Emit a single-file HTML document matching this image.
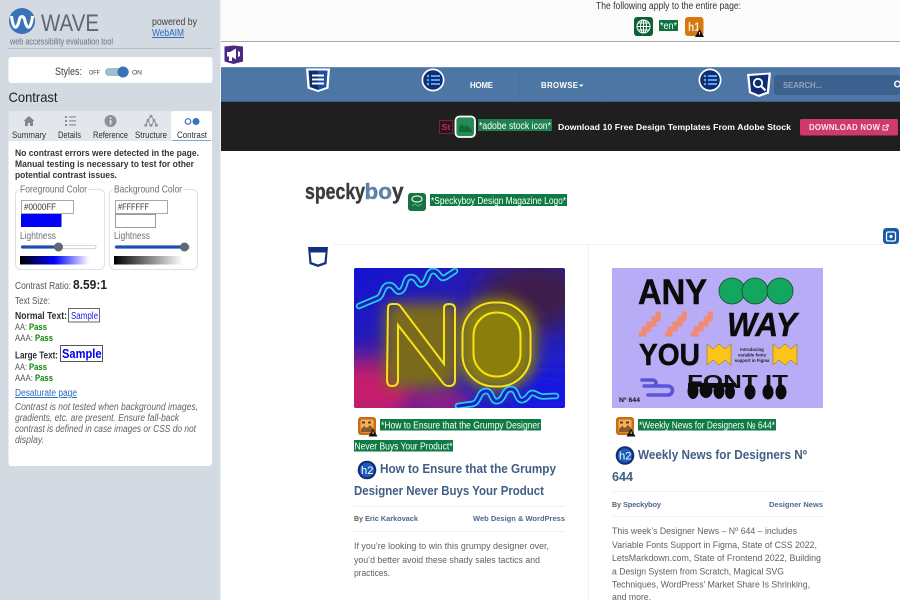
<!DOCTYPE html>
<html lang="en"><head><meta charset="utf-8"><title>WAVE Contrast</title>
<style>
html,body{margin:0;padding:0;width:900px;height:600px;overflow:hidden;background:#fff}
svg{display:block;position:absolute;left:0;top:0;filter:blur(.25px)}
text{font-family:"Liberation Sans",sans-serif;white-space:pre}
.s{fill:#3c3f44}
.b{font-weight:bold}
.h{font-weight:bold;font-size:12.8px;fill:#3f5f85}
.m{font-weight:bold;font-size:7.5px;fill:#4a6a90}
.p{font-size:9.6px;fill:#5f5f5f}
.alt{font-size:9.800px;fill:#fff}
.pass{font-weight:bold;font-size:9.500px;fill:#0a8a0a}
.w{fill:#fff}
</style></head><body>
<svg width="900" height="600" viewBox="0 0 900 600" xmlns="http://www.w3.org/2000/svg">
<defs>
<linearGradient id="gf" x1="0" x2="1" y1="0" y2="0"><stop offset="0" stop-color="#000"/><stop offset=".5" stop-color="#00f"/><stop offset="1" stop-color="#fff"/></linearGradient>
<linearGradient id="gb" x1="0" x2="1" y1="0" y2="0"><stop offset="0" stop-color="#000"/><stop offset="1" stop-color="#fff"/></linearGradient>
<linearGradient id="n1" x1="0" x2="1" y1="0" y2="1"><stop offset="0" stop-color="#1212d4"/><stop offset=".45" stop-color="#2e1fa8"/><stop offset="1" stop-color="#1a20d8"/></linearGradient>
<filter id="bl" x="-40%" y="-40%" width="180%" height="180%"><feGaussianBlur stdDeviation="7"/></filter>
<filter id="bl2" x="-40%" y="-40%" width="180%" height="180%"><feGaussianBlur stdDeviation="13"/></filter>
<clipPath id="c1"><rect x="354" y="268" width="211" height="140" rx="2"/></clipPath>
</defs>

<!-- sidebar -->
<rect width="220" height="600" fill="#d3dae2"/>
<rect x="220" width="1" height="600" fill="#eef0f3"/>
<circle cx="22" cy="21" r="13" fill="#3a72b8"/>
<path d="M11.500 16 C13 30 17 30 19 21 C20 15 24 15 25 21 C27 30 31 30 32.500 16" fill="none" stroke="#fff" stroke-width="3"/>
<text x="41" y="31" font-size="24" fill="#5d6772" textLength="58" lengthAdjust="spacingAndGlyphs">WAVE</text>
<text x="10" y="44.500" font-size="9.500" fill="#6a7480" textLength="103" lengthAdjust="spacingAndGlyphs">web accessibility evaluation tool</text>
<rect x="8" y="48" width="205" height="1" fill="#b6bec7"/>
<text x="152" y="25" font-size="9.800" fill="#3c3f44" textLength="45" lengthAdjust="spacingAndGlyphs">powered by</text>
<text x="152" y="36" font-size="9.800" fill="#2a6bc0" text-decoration="underline" textLength="32" lengthAdjust="spacingAndGlyphs">WebAIM</text>
<rect x="8.500" y="57" width="204" height="26" rx="3" fill="#fff"/>
<text x="55" y="75" font-size="11" class="s" textLength="27" lengthAdjust="spacingAndGlyphs">Styles:</text>
<text x="89" y="74.500" font-size="6.500" class="s" textLength="11" lengthAdjust="spacingAndGlyphs">OFF</text>
<rect x="105" y="68" width="24" height="8" rx="4" fill="#a0bfce"/>
<circle cx="123" cy="72" r="5.500" fill="#3a72b8"/>
<text x="132" y="74.500" font-size="6.500" class="s" textLength="10" lengthAdjust="spacingAndGlyphs">ON</text>
<text x="8.500" y="102" font-size="14" fill="#222" textLength="49" lengthAdjust="spacingAndGlyphs">Contrast</text>

<!-- tabs -->
<path d="M8.500 141V114a3 3 0 0 1 3-3H212V141Z" fill="#e3e7ec"/>
<path d="M8.500 141H212V463a3 3 0 0 1-3 3H11.500a3 3 0 0 1-3-3Z" fill="#fff"/>
<path d="M171 141V114a3 3 0 0 1 3-3h35a3 3 0 0 1 3 3v27Z" fill="#fff"/>
<rect x="172" y="140" width="39" height="1" fill="#6d8fc0" opacity=".8"/>
<path d="M23.500 121l5.500-5 5.500 5h-1.500v5h-3v-3h-2v3h-3v-5Z" fill="#808890"/>
<g fill="#878f97"><rect x="65" y="116" width="2" height="2"/><rect x="65" y="120" width="2" height="2"/><rect x="65" y="124" width="2" height="2"/><rect x="69" y="116.300" width="7" height="1.200"/><rect x="69" y="120.300" width="7" height="1.200"/><rect x="69" y="124.300" width="7" height="1.200"/></g>
<circle cx="110.500" cy="121" r="6" fill="#8a9199"/><rect x="109.700" y="120" width="1.700" height="4.500" fill="#e3e7ec"/><rect x="109.700" y="117.300" width="1.700" height="1.700" fill="#e3e7ec"/>
<path d="M151 116l-3 4M151 116l3 4M148 120l-2.500 5M148 120l2 5M154 120l-2 5M154 120l2.500 5" stroke="#8a9199" stroke-width="1" fill="none"/>
<g fill="#8a9199"><rect x="149.700" y="115" width="2.600" height="2.600"/><rect x="146.700" y="119" width="2.600" height="2.600"/><rect x="152.700" y="119" width="2.600" height="2.600"/><rect x="144.500" y="124" width="2.600" height="2.600"/><rect x="149.700" y="124" width="2.600" height="2.600"/><rect x="155" y="124" width="2.600" height="2.600"/></g>
<circle cx="188" cy="121.500" r="2.800" fill="#fff" stroke="#3a72b8" stroke-width="1.200"/><circle cx="196" cy="121.500" r="3.500" fill="#3a72b8"/>
<g font-size="8.800" fill="#2c3036">
<text x="12" y="138" textLength="34" lengthAdjust="spacingAndGlyphs">Summary</text>
<text x="58" y="138" textLength="23" lengthAdjust="spacingAndGlyphs">Details</text>
<text x="93" y="138" textLength="35" lengthAdjust="spacingAndGlyphs">Reference</text>
<text x="135" y="138" textLength="32" lengthAdjust="spacingAndGlyphs">Structure</text>
<text x="177" y="138" textLength="30" lengthAdjust="spacingAndGlyphs">Contrast</text>
</g>

<!-- panel -->
<g font-size="9.600" class="b" fill="#33363a">
<text x="15" y="156" textLength="184" lengthAdjust="spacingAndGlyphs">No contrast errors were detected in the page.</text>
<text x="15" y="167" textLength="179" lengthAdjust="spacingAndGlyphs">Manual testing is necessary to test for other</text>
<text x="15" y="178" textLength="102" lengthAdjust="spacingAndGlyphs">potential contrast issues.</text>
</g>
<rect x="15.500" y="189.500" width="89" height="80" rx="5" fill="#fff" stroke="#dde1e6"/>
<rect x="109.500" y="189.500" width="88" height="80" rx="5" fill="#fff" stroke="#dde1e6"/>
<rect x="19" y="186" width="69" height="8" fill="#fff"/>
<rect x="113" y="186" width="70" height="8" fill="#fff"/>
<g font-size="9.800" fill="#6a7178">
<text x="20" y="192.500" textLength="67" lengthAdjust="spacingAndGlyphs">Foreground Color</text>
<text x="114" y="192.500" textLength="68" lengthAdjust="spacingAndGlyphs">Background Color</text>
<text x="20" y="239" textLength="36" lengthAdjust="spacingAndGlyphs">Lightness</text>
<text x="114" y="239" textLength="36" lengthAdjust="spacingAndGlyphs">Lightness</text>
</g>
<rect x="21.500" y="200.500" width="52" height="13" fill="#fff" stroke="#a8a8a8"/>
<rect x="115.500" y="200.500" width="52" height="13" fill="#fff" stroke="#a8a8a8"/>
<text x="24" y="210" font-size="9.200" fill="#333" textLength="32" lengthAdjust="spacingAndGlyphs">#0000FF</text>
<text x="118" y="210" font-size="9.200" fill="#333" textLength="31" lengthAdjust="spacingAndGlyphs">#FFFFFF</text>
<rect x="21" y="214" width="40.500" height="13" fill="#0000f5"/>
<rect x="115.500" y="214.500" width="40" height="13" fill="#fff" stroke="#9a9a9a"/>
<rect x="21" y="245.500" width="75" height="3" rx="1.500" fill="#fff" stroke="#c6c9cd" stroke-width=".8"/>
<rect x="21" y="245.500" width="37" height="3" rx="1.500" fill="#1a50b5"/>
<circle cx="58.500" cy="247" r="4.500" fill="#5e6874"/>
<rect x="115" y="245.500" width="75" height="3" rx="1.500" fill="#fff" stroke="#c6c9cd" stroke-width=".8"/>
<rect x="115" y="245.500" width="70" height="3" rx="1.500" fill="#1a50b5"/>
<circle cx="184.500" cy="247" r="4.500" fill="#5e6874"/>
<rect x="20" y="256" width="69" height="8.500" fill="url(#gf)"/>
<rect x="114" y="256" width="69" height="8.500" fill="url(#gb)"/>

<text x="15" y="289" font-size="9.800" fill="#555" textLength="56" lengthAdjust="spacingAndGlyphs">Contrast Ratio:</text>
<text x="73" y="289" font-size="12.500" class="b" fill="#222" textLength="34" lengthAdjust="spacingAndGlyphs">8.59:1</text>
<text x="15" y="304" font-size="9.800" fill="#555" textLength="35" lengthAdjust="spacingAndGlyphs">Text Size:</text>
<text x="15" y="319" font-size="9.800" class="b" fill="#2c2f33" textLength="52" lengthAdjust="spacingAndGlyphs">Normal Text:</text>
<rect x="68.500" y="308.500" width="31" height="13.500" fill="#fff" stroke="#666"/>
<text x="71" y="319" font-size="9.800" fill="#2020e0" textLength="27" lengthAdjust="spacingAndGlyphs">Sample</text>
<text x="15" y="330" font-size="9.500" fill="#555" textLength="12" lengthAdjust="spacingAndGlyphs">AA:</text><text x="29" y="330" class="pass" textLength="18" lengthAdjust="spacingAndGlyphs">Pass</text>
<text x="15" y="341" font-size="9.500" fill="#555" textLength="18" lengthAdjust="spacingAndGlyphs">AAA:</text><text x="35" y="341" class="pass" textLength="18" lengthAdjust="spacingAndGlyphs">Pass</text>
<text x="15" y="358.500" font-size="9.800" class="b" fill="#2c2f33" textLength="43" lengthAdjust="spacingAndGlyphs">Large Text:</text>
<rect x="60.500" y="345.500" width="42" height="16" fill="#fff" stroke="#555"/>
<text x="62" y="358" font-size="13" class="b" fill="#0000e8" textLength="39.500" lengthAdjust="spacingAndGlyphs">Sample</text>
<text x="15" y="370" font-size="9.500" fill="#555" textLength="12" lengthAdjust="spacingAndGlyphs">AA:</text><text x="29" y="370" class="pass" textLength="18" lengthAdjust="spacingAndGlyphs">Pass</text>
<text x="15" y="381" font-size="9.500" fill="#555" textLength="18" lengthAdjust="spacingAndGlyphs">AAA:</text><text x="35" y="381" class="pass" textLength="18" lengthAdjust="spacingAndGlyphs">Pass</text>
<text x="15" y="396" font-size="9.800" fill="#2a6bc0" text-decoration="underline" textLength="62" lengthAdjust="spacingAndGlyphs">Desaturate page</text>
<g font-size="9.800" font-style="italic" fill="#5e6268">
<text x="15" y="410" textLength="183" lengthAdjust="spacingAndGlyphs">Contrast is not tested when background images,</text>
<text x="15" y="421" textLength="164" lengthAdjust="spacingAndGlyphs">gradients, etc. are present. Ensure fall-back</text>
<text x="15" y="432" textLength="181" lengthAdjust="spacingAndGlyphs">contrast is defined in case images or CSS do not</text>
<text x="15" y="443" textLength="29" lengthAdjust="spacingAndGlyphs">display.</text>
</g>

<!-- top page-wide bar -->
<rect x="221" y="0" width="679" height="41" fill="#fbfbfb"/>
<rect x="221" y="41" width="679" height="1" fill="#a9a9a9"/>
<text x="596" y="9" font-size="10" fill="#333" textLength="145" lengthAdjust="spacingAndGlyphs">The following apply to the entire page:</text>
<rect x="634" y="17" width="19" height="19" rx="3" fill="#0e5f33"/>
<g fill="none" stroke="#fff" stroke-width="1"><circle cx="643.500" cy="26.500" r="6.500"/><ellipse cx="643.500" cy="26.500" rx="3" ry="6.500"/><path d="M637 26.500h13M638 23h11M638 30h11M643.500 20v13"/></g>
<rect x="659" y="20" width="19" height="11" fill="#0f7040"/>
<text x="660" y="29" class="alt" textLength="17" lengthAdjust="spacingAndGlyphs">*en*</text>
<rect x="685" y="17" width="18.500" height="19" rx="3" fill="#d4780f"/>
<text x="688" y="31" font-size="12" class="b" fill="#f7e6cc" textLength="12" lengthAdjust="spacingAndGlyphs">h1</text>
<path d="M699.500 29l4.500 8h-9Z" fill="#111"/><rect x="699.100" y="32" width=".9" height="2.500" fill="#fff"/>

<!-- megaphone -->
<path d="M224.500 46.500l9-1 9.500 1v15l-9.500 2.500-9-2.500Z" fill="#4b2a85"/>
<path d="M227 52h3l6-3.500v11l-4-2.500v4h-3v-4.500h-2ZM238 51v6l2-1v-4Z" fill="#fff"/>

<!-- nav -->
<rect x="221" y="67" width="679" height="35" fill="#4d76a4"/>
<rect x="221" y="67" width="679" height="1" fill="#6b8eb6"/>
<rect x="221" y="101" width="679" height="1" fill="#3b5f8a"/>
<rect x="519" y="68" width="1" height="33" fill="#4870a0"/><rect x="605" y="68" width="1" height="33" fill="#4870a0"/>
<path d="M306 68.500h24l-1.500 20-10.500 3.500-10.500-3.500Z" fill="#fff"/>
<path d="M308.500 70.500h19l-1.300 16.500-8.200 3-8.200-3Z" fill="#0f2d72"/>
<path d="M318 70.500h9.500l-1.300 16.500-8.200 3Z" fill="#1c4ea5"/>
<g fill="#fff"><rect x="312" y="74.500" width="12" height="2"/><rect x="312" y="78.500" width="12" height="2"/><rect x="312" y="82.500" width="12" height="2"/></g>
<circle cx="433" cy="80" r="11.500" fill="#fff"/><circle cx="433" cy="80" r="9.800" fill="#0f2d72"/><g fill="#5aa0f0"><circle cx="428" cy="76" r="1.300"/><circle cx="428" cy="80" r="1.300"/><circle cx="428" cy="84" r="1.300"/><rect x="431" y="75" width="9" height="2"/><rect x="431" y="79" width="9" height="2"/><rect x="431" y="83" width="9" height="2"/></g>
<circle cx="710" cy="80" r="11.500" fill="#fff"/><circle cx="710" cy="80" r="9.800" fill="#0f2d72"/><g fill="#5aa0f0"><circle cx="705" cy="76" r="1.300"/><circle cx="705" cy="80" r="1.300"/><circle cx="705" cy="84" r="1.300"/><rect x="708" y="75" width="9" height="2"/><rect x="708" y="79" width="9" height="2"/><rect x="708" y="83" width="9" height="2"/></g>
<text x="470" y="88" font-size="7.800" class="b w" textLength="23" lengthAdjust="spacing">HOME</text>
<text x="541" y="88" font-size="7.800" class="b w" textLength="37" lengthAdjust="spacing">BROWSE</text>
<path d="M579 84.500h4.500l-2.250 2.500Z" fill="#fff"/>
<path d="M747 74l24-1.500-2 21-10 3.500-10-4Z" fill="#fff"/>
<path d="M749.500 76l19-1.500-1.700 17.200-8 3-7.800-3.200Z" fill="#0f2d72"/>
<circle cx="758" cy="83" r="4.200" fill="none" stroke="#fff" stroke-width="1.800"/><path d="M761 86l4.500 4.500" stroke="#fff" stroke-width="2.200"/>
<rect x="774" y="75" width="126" height="20" rx="3" fill="#3d618e"/>
<text x="783" y="88" font-size="7.800" class="b" fill="#8fa6bf" textLength="39" lengthAdjust="spacing">SEARCH...</text>
<circle cx="897.500" cy="84" r="2.800" fill="none" stroke="#fff" stroke-width="1.400"/>

<!-- promo bar -->
<rect x="221" y="102" width="679" height="49" fill="#1f1f1f"/>
<rect x="439.500" y="120.500" width="13" height="13" fill="#2a141c" stroke="#7d2040"/>
<text x="441.500" y="130" font-size="8" class="b" fill="#b8305c" textLength="9" lengthAdjust="spacingAndGlyphs">St</text>
<rect x="455.500" y="116.500" width="19.500" height="20.500" rx="4" fill="#278a55" stroke="#fff" stroke-width="1.800"/>
<path d="M459 132v-5l3-3 3 3 2-2 5 5v2Z" fill="#0f6b38"/>
<rect x="478" y="119" width="74" height="12" fill="#1f8050"/>
<text x="479" y="129" class="alt" textLength="72" lengthAdjust="spacingAndGlyphs">*adobe stock icon*</text>
<text x="558" y="130" font-size="8.700" class="b w" textLength="233" lengthAdjust="spacing">Download 10 Free Design Templates From Adobe Stock</text>
<rect x="800" y="119" width="98" height="16.500" rx="1.500" fill="#cf3a6e"/>
<text x="809" y="130" font-size="7.800" class="b" fill="#fbe6ee" textLength="71" lengthAdjust="spacing">DOWNLOAD NOW</text>
<path d="M883 125.500h2.500M883 125.500v4.500h4.500v-2.500M885.500 128l2.500-3M886 124.800h2.300v2.300" fill="none" stroke="#fbe6ee" stroke-width=".9"/>

<!-- logo -->
<text x="305" y="199" font-size="22" class="b" fill="#3b3b3d" stroke="#3b3b3d" stroke-width=".4" textLength="60" lengthAdjust="spacingAndGlyphs">specky</text>
<text x="364.500" y="199" font-size="22" class="b" fill="#5f82a9" stroke="#5f82a9" stroke-width=".4" textLength="27.500" lengthAdjust="spacingAndGlyphs">bo</text>
<text x="392" y="199" font-size="22" class="b" fill="#3b3b3d" stroke="#3b3b3d" stroke-width=".4" textLength="11.500" lengthAdjust="spacingAndGlyphs">y</text>
<rect x="408" y="193" width="18" height="18" rx="3" fill="#17733f"/>
<path d="M412 199c0-4 10-4 10 0s-10 4-10 0Z" fill="none" stroke="#dff2e6" stroke-width="1.200"/><path d="M412 206l3-2 3 2 4-2" stroke="#5fae82" fill="none"/>
<rect x="430" y="194" width="137" height="12" fill="#107a45"/>
<text x="431" y="204" class="alt" textLength="135" lengthAdjust="spacingAndGlyphs">*Speckyboy Design Magazine Logo*</text>

<!-- grid lines -->
<rect x="333" y="244" width="567" height="1" fill="#f2f2f2"/>
<rect x="588" y="244" width="1" height="356" fill="#f2f2f2"/>
<path d="M308 247h20l-1.500 17-8.500 3-8.500-3Z" fill="#14307e"/>
<path d="M310.500 252.500h15l-1.100 9.700-6.400 2.300-6.400-2.300Z" fill="#fff"/>
<rect x="882" y="227" width="18" height="18" rx="4" fill="#fff"/>
<rect x="883" y="228" width="16" height="16" rx="3.500" fill="#1a5aa8"/>
<rect x="886.500" y="232" width="9" height="9" rx="1.500" fill="none" stroke="#fff" stroke-width="1.300"/><circle cx="891" cy="236.500" r="1.600" fill="#fff"/>

<!-- neon image -->
<g clip-path="url(#c1)">
<rect x="354" y="268" width="211" height="140" fill="url(#n1)"/>
<ellipse cx="535" cy="295" rx="55" ry="36" fill="#3c1c4c" filter="url(#bl2)"/>
<ellipse cx="362" cy="392" rx="60" ry="34" fill="#c81f6c" filter="url(#bl2)"/>
<ellipse cx="440" cy="402" rx="32" ry="14" fill="#8a1a88" filter="url(#bl)"/>
<ellipse cx="548" cy="392" rx="42" ry="20" fill="#1414e0" filter="url(#bl)"/>
<rect x="385" y="303" width="72" height="85" rx="8" fill="#7a6a1c" filter="url(#bl)"/>
<rect x="458" y="298" width="78" height="92" rx="34" fill="#8a7e10" filter="url(#bl)"/>
<path d="M388 308Q388 304 392 304L396 304Q399 304 401 307L444 364L444 308Q444 304 449 304Q455 304 455 309L455 380Q455 386 449 386Q445 386 443 383L398 325L398 380Q398 386 392 386Q387 386 387 380Z" fill="none" stroke="#f8e414" stroke-width="2"/>
<rect x="462.500" y="302.500" width="68" height="84" rx="32" fill="none" stroke="#f8e414" stroke-width="2"/>
<rect x="473.500" y="312.500" width="47" height="64" rx="23" fill="none" stroke="#f8e414" stroke-width="2"/>
<path d="M359 306L378 298C383 296 382 285 389 285C396 285 395 294 401 291C406 288 404 277 411 277C418 277 417 287 423 284C428 281 427 271 433 271C440 271 439 281 446 277L455 271" fill="none" stroke="#25cde8" stroke-width="6.500" stroke-linecap="round"/>
<path d="M359 306L378 298C383 296 382 285 389 285C396 285 395 294 401 291C406 288 404 277 411 277C418 277 417 287 423 284C428 281 427 271 433 271C440 271 439 281 446 277L455 271" fill="none" stroke="#1f1cb8" stroke-width="3" stroke-linecap="round"/>
<path d="M458 406L472 404C480 403 478 391 486 391C493 391 491 403 498 401C505 399 503 389 511 389C518 389 516 402 523 400C530 398 528 390 536 394C542 398 546 396 552 396L556 396" fill="none" stroke="#25cde8" stroke-width="6.500" stroke-linecap="round"/>
<path d="M458 406L472 404C480 403 478 391 486 391C493 391 491 403 498 401C505 399 503 389 511 389C518 389 516 402 523 400C530 398 528 390 536 394C542 398 546 396 552 396L556 396" fill="none" stroke="#1a1cc8" stroke-width="3" stroke-linecap="round"/>
</g>

<!-- any way image -->
<rect x="612" y="268" width="211" height="140" fill="#b9acf6"/>
<text x="638" y="304" font-size="35" class="b" fill="#0b0b0b" stroke="#0b0b0b" stroke-width=".5" textLength="69" lengthAdjust="spacingAndGlyphs">ANY</text>
<g fill="#12a65e" stroke="#154a33" stroke-width=".8"><circle cx="732" cy="291" r="13"/><circle cx="755" cy="291" r="13"/><circle cx="780" cy="291" r="13"/></g>
<g fill="none" stroke="#f08a72" stroke-width="5">
<path d="M639 334h5v-5h5v-5h5v-5h4v-5h3"/>
<path d="M665 334h5v-5h5v-5h5v-5h4v-5h3"/>
<path d="M691 334h5v-5h5v-5h5v-5h4v-5h3"/>
</g>
<text x="727" y="336" font-size="33" font-weight="bold" font-style="italic" fill="#0b0b0b" stroke="#0b0b0b" stroke-width=".4" textLength="70" lengthAdjust="spacingAndGlyphs">WAY</text>
<text x="639" y="365" font-size="31" class="b" fill="#0b0b0b" stroke="#0b0b0b" stroke-width=".5" textLength="61" lengthAdjust="spacingAndGlyphs">YOU</text>
<path d="M707 344l6 5 6-5 6 5 6-5v21l-6-5-6 5-6-5-6 5Z" fill="#fcc419" stroke="#7a6520" stroke-width=".5"/>
<path d="M773 344l6 5 6-5 6 5 6-5v21l-6-5-6 5-6-5-6 5Z" fill="#fcc419" stroke="#7a6520" stroke-width=".5"/>
<g font-size="4.300" class="b" fill="#222" text-anchor="middle"><text x="752" y="351">Introducing</text><text x="752" y="356.500">variable fonts</text><text x="752" y="362">support in Figma</text></g>
<path d="M642 380H653A3 3 0 0 1 653 386H644M644 386H668A4.500 4.500 0 0 1 668 395H648" fill="none" stroke="#5a55d8" stroke-width="3.600" stroke-linecap="round"/>
<text x="687" y="388" font-size="18" class="b" fill="#111" textLength="101" lengthAdjust="spacingAndGlyphs">FONT IT</text>
<g fill="#0b0b0b"><ellipse cx="693" cy="391" rx="5.500" ry="8"/><ellipse cx="706" cy="390" rx="6.500" ry="8"/><ellipse cx="719" cy="391" rx="5.500" ry="8"/><ellipse cx="730" cy="392" rx="5" ry="7"/><ellipse cx="750" cy="392" rx="5.500" ry="7.500"/><ellipse cx="768" cy="392" rx="5.500" ry="7.500"/><ellipse cx="781" cy="392" rx="5.500" ry="7.500"/><rect x="688" y="383" width="48" height="4"/></g>
<text x="619" y="402" font-size="6.200" class="b" fill="#111" textLength="21" lengthAdjust="spacingAndGlyphs">Nº 644</text>

<!-- article 1 -->
<rect x="358" y="417" width="18" height="18" rx="3" fill="#c96d12"/>
<rect x="360.500" y="419.500" width="13" height="13" rx="1.500" fill="#f0b060"/>
<path d="M361 432v-3l3-3 3 2 3-3 3 3v4Z" fill="#8a5a28"/><rect x="362" y="421.500" width="3" height="2" fill="#5a3a1a"/><rect x="368" y="421.500" width="3" height="2" fill="#5a3a1a"/>
<path d="M373 428.500l4.500 8h-9Z" fill="#111"/><rect x="372.600" y="431.500" width=".9" height="2.500" fill="#fff"/>
<rect x="380" y="419" width="161" height="11.500" fill="#107a45"/>
<text x="381" y="428.500" class="alt" textLength="159" lengthAdjust="spacingAndGlyphs">*How to Ensure that the Grumpy Designer</text>
<rect x="354" y="440" width="99" height="11.500" fill="#107a45"/>
<text x="354.500" y="449.500" class="alt" textLength="98" lengthAdjust="spacingAndGlyphs">Never Buys Your Product*</text>
<circle cx="367" cy="470" r="9.300" fill="#0f2d72"/><circle cx="367" cy="470" r="7.300" fill="#1d5cb8"/>
<text x="361" y="474" font-size="11" class="w" textLength="12.500" lengthAdjust="spacingAndGlyphs">h2</text>
<text x="380" y="473" class="h" textLength="176" lengthAdjust="spacingAndGlyphs">How to Ensure that the Grumpy</text>
<text x="354" y="495" class="h" textLength="190" lengthAdjust="spacingAndGlyphs">Designer Never Buys Your Product</text>
<rect x="354" y="506" width="211" height="1" fill="#f1f1f1"/>
<text x="354" y="521" class="m" style="fill:#5a5a5a" textLength="9" lengthAdjust="spacingAndGlyphs">By</text>
<text x="365" y="521" class="m" textLength="53" lengthAdjust="spacing">Eric Karkovack</text>
<text x="473" y="521" class="m" textLength="92" lengthAdjust="spacing">Web Design &amp; WordPress</text>
<rect x="354" y="531" width="211" height="1" fill="#f1f1f1"/>
<text x="354" y="549" class="p" textLength="195" lengthAdjust="spacingAndGlyphs">If you’re looking to win this grumpy designer over,</text>
<text x="354" y="563" class="p" textLength="186" lengthAdjust="spacingAndGlyphs">you’d better avoid these shady sales tactics and</text>
<text x="354" y="576" class="p" textLength="36" lengthAdjust="spacingAndGlyphs">practices.</text>

<!-- article 2 -->
<rect x="616" y="417" width="18" height="18" rx="3" fill="#c96d12"/>
<rect x="618.500" y="419.500" width="13" height="13" rx="1.500" fill="#f0b060"/>
<path d="M619 432v-3l3-3 3 2 3-3 3 3v4Z" fill="#8a5a28"/><rect x="620" y="421.500" width="3" height="2" fill="#5a3a1a"/><rect x="626" y="421.500" width="3" height="2" fill="#5a3a1a"/>
<path d="M631 428.500l4.500 8h-9Z" fill="#111"/><rect x="630.600" y="431.500" width=".9" height="2.500" fill="#fff"/>
<rect x="638" y="419" width="138" height="11.500" fill="#107a45"/>
<text x="639" y="428.500" class="alt" textLength="136" lengthAdjust="spacingAndGlyphs">*Weekly News for Designers № 644*</text>
<circle cx="625" cy="455.500" r="9.300" fill="#0f2d72"/><circle cx="625" cy="455.500" r="7.300" fill="#1d5cb8"/>
<text x="619" y="459.500" font-size="11" class="w" textLength="12.500" lengthAdjust="spacingAndGlyphs">h2</text>
<text x="638" y="459" class="h" textLength="169" lengthAdjust="spacingAndGlyphs">Weekly News for Designers Nº</text>
<text x="612" y="481" class="h" textLength="21" lengthAdjust="spacingAndGlyphs">644</text>
<rect x="612" y="491" width="211" height="1" fill="#f1f1f1"/>
<text x="612" y="507" class="m" style="fill:#5a5a5a" textLength="9" lengthAdjust="spacingAndGlyphs">By</text>
<text x="623" y="507" class="m" textLength="38" lengthAdjust="spacing">Speckyboy</text>
<text x="769" y="507" class="m" textLength="54" lengthAdjust="spacing">Designer News</text>
<rect x="612" y="516" width="211" height="1" fill="#f1f1f1"/>
<text x="612" y="534" class="p" textLength="185" lengthAdjust="spacingAndGlyphs">This week’s Designer News – Nº 644 – includes</text>
<text x="612" y="548" class="p" textLength="205" lengthAdjust="spacingAndGlyphs">Variable Fonts Support in Figma, State of CSS 2022,</text>
<text x="612" y="561" class="p" textLength="209" lengthAdjust="spacingAndGlyphs">LetsMarkdown.com, State of Frontend 2022, Building</text>
<text x="612" y="574.500" class="p" textLength="172" lengthAdjust="spacingAndGlyphs">a Design System from Scratch, Magical SVG</text>
<text x="612" y="587.500" class="p" textLength="198" lengthAdjust="spacingAndGlyphs">Techniques, WordPress’ Market Share Is Shrinking,</text>
<text x="612" y="600" class="p" textLength="39" lengthAdjust="spacingAndGlyphs">and more.</text>
</svg>
</body></html>
